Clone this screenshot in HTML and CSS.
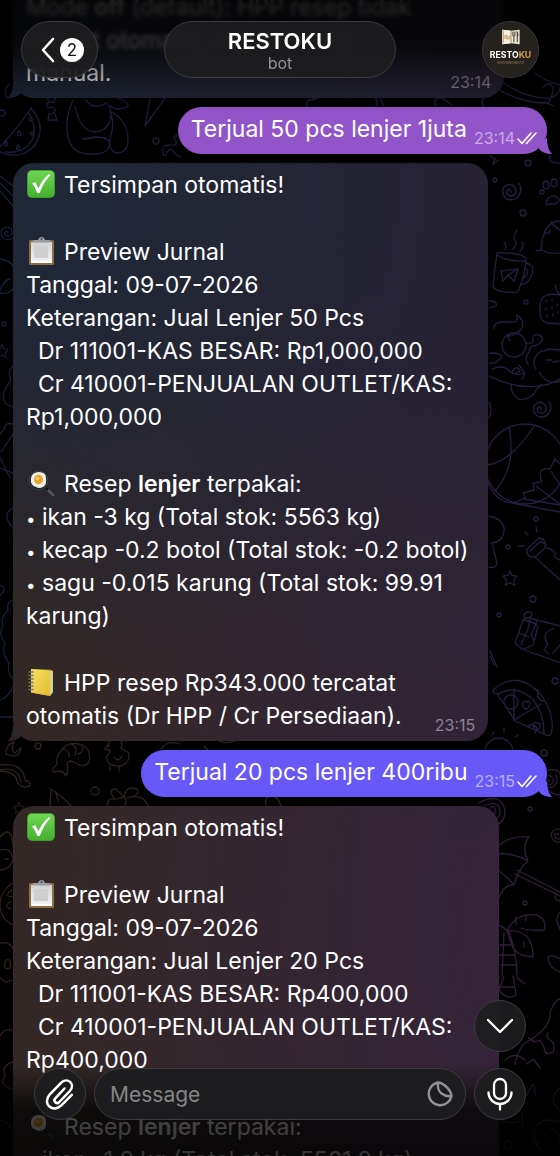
FILE: index.html
```html
<!DOCTYPE html>
<html lang="id">
<head>
<meta charset="utf-8">
<meta name="viewport" content="width=device-width, initial-scale=1">
<title>RESTOKU</title>
<link rel="stylesheet" href="styles.css">
</head>
<body>
<svg class="defs" aria-hidden="true">
  <defs>
    <linearGradient id="green" x1="0" y1="0" x2="0" y2="1"><stop offset="0" stop-color="#6fd653"/><stop offset="1" stop-color="#45b02f"/></linearGradient>
    <linearGradient id="yellow" x1="0" y1="0" x2="1" y2="1"><stop offset="0" stop-color="#f8e268"/><stop offset="1" stop-color="#e2bc2c"/></linearGradient>
    <linearGradient id="paper" x1="0" y1="0" x2="0" y2="1"><stop offset="0" stop-color="#d2d2d4"/><stop offset="1" stop-color="#f4f4f6"/></linearGradient>
    <symbol id="check" viewBox="0 0 28 28">
      <rect width="28" height="28" rx="5" fill="#3f9e30"/><rect x="1" y="1" width="26" height="26" rx="4" fill="url(#green)"/>
      <path d="M5 13.6 8.3 12l3.2 6.2C14 12.400 17.400 7.600 22 4l1.300 1C18.600 10 15.300 16 12.700 23h-2.600C9 19.300 7.400 16.200 5 13.600Z" fill="#fff"/>
    </symbol>
    <symbol id="clip" viewBox="0 0 28 28">
      <rect x="2" y="3" width="25" height="25" rx="1.500" fill="#8f6f45"/><path d="M4 5h21v21H4z" fill="url(#paper)"/><path d="M7 9h14v12H7z" fill="#cfcfd2"/>
      <path d="M4 26V24h21v2z" fill="#fff"/><path d="M6 5.500V4q0-1 1-1h4q1-3 3.500-3T18 3h4q1 0 1 1v1.500z" fill="#9a9ca2"/><circle cx="14.500" cy="2" r="1" fill="#44464c"/>
    </symbol>
    <symbol id="pan" viewBox="0 0 28 28">
      <path d="m17 17 9 9" stroke="#50565b" stroke-width="2.500" stroke-linecap="round"/><path d="m16 16 5 5" stroke="#15191b" stroke-width="3"/>
      <circle cx="11.500" cy="11.500" r="10.500" fill="#1b2223"/><circle cx="11.500" cy="11.500" r="9.500" fill="none" stroke="#3c4748"/>
      <path d="M4 9q1-6 8-6 7 0 7 6 1 7-3 9-4 2-7 0-6-1-5-9Z" fill="#f2eee3"/><circle cx="11.500" cy="10.500" r="4.500" fill="#e7a22c"/><circle cx="10.500" cy="9.500" r="1.800" fill="#f8cf72"/>
    </symbol>
    <symbol id="note" viewBox="0 0 28 28">
      <path d="m4 1 19 .5 3 1.500V24l-3 4L4 24.500z" fill="#a88b20"/><path d="m4 1 19 1.500V28L4 24.500z" fill="url(#yellow)"/><path d="m23 2.500 3 .5v21l-3 4z" fill="#d5cc98"/>
      <path d="M2 4h4M2 7.500h4M2 11h4M2 14.500h4M2 18h4M2 21.500h4" stroke="#777261" stroke-width="1.500" stroke-linecap="round"/>
    </symbol>
    <symbol id="ticks" viewBox="0 0 20 14">
      <path d="m1 8 4 4.500L14 2M9.500 12.500 19 2" fill="none" stroke="#fff" stroke-width="1.600" stroke-linecap="round" stroke-linejoin="round"/>
    </symbol>
    <symbol id="tail" viewBox="0 0 18 16"><path d="M13 0Q13 11 18 16 10 16 6 12L1 5Z"/></symbol>
    <symbol id="spiral" viewBox="-10 -10 20 20"><path d="M7-8c5 7-1 16-8 15C-8 6-10-3-4-6 1-9 6-3 4 1 2 5-4 4-4 0c0-3 4-3 4 0" fill="none"/></symbol>
    <symbol id="star" viewBox="-10 -10 20 20"><path d="m0-8 2 5 6 1-4 4 1 6-5-3-5 3 1-6-4-4 6-1Z" fill="none" stroke-linejoin="round"/></symbol>
  </defs>
</svg>

<div class="screen">
  <svg class="wallpaper" viewBox="0 0 560 1156" preserveAspectRatio="xMidYMin slice" aria-hidden="true">
    <g class="doodle blue">
      <path d="M31 108C47 126 40 145 25 153q-14 6-28-3Q18 128 31 108M28 112q10 16 4 28-8 14-26 12M19 131q4 4 0 5-3-1 0-5M31 118q4 2 0 3-4-1 0-3M32 132q4 1 0 3-4-1 0-3M6 141q3 4 0 5-3-1 0-5M18 145q3 4 0 5-3-1 0-5"/>
      <circle cx="2" cy="113" r="3"/><circle cx="156" cy="141" r="3"/>
      <path d="m46 94 11 0-3 8H49zM48 102q-3 4 0 6 6-2 7 2 0 4-6 4M49 114l-1 6h9l-2-6"/>
      <path d="M73 100q-10 22-4 40 4 14 22 14 18 1 19-11-2-6-14-6-9 2-14 2M75 106q4 22 18 26 13 0 17-11 4-12-4-18-12 8-20-3M110 111q18 10 18 28 0 14-12 14-10-4-4-22 2-10-2-20M118 98q10 3 10 8-10 6-18 0M165 98l-20 28 5-27M8 98q-6-5 1-14"/>
      <path d="M181 157q-6-2-8-6t-6 1q-1 6-4 2-2-8 5-9 10 1 8-4-4-4 1-6"/>
      <path d="m0 176 13 10M0 183l13 13M0 191l13 15"/><use href="#spiral" x="-1" y="223" width="18" height="20"/>
      <path d="M0 259q12 2 13 8M0 290q5-11 10-11M0 293q10 2 14-6"/><circle cx="4" cy="324" r="2"/><use href="#star" x="-6" y="343" width="16" height="16"/>
      <path d="M13 366q-6 5-2 14-12 16-5 24l7 3M13 424q-8-2-8 4l-5 6M13 434 1 452M0 468l13 5M0 457l10 21"/>
      <path d="M13 508q-9 5-5 13l6 8M0 585q8 3 0 10M13 600q-7 3-5 11-8 6-5 14-5 10 2 18-4 11 4 20-2 10 4 16M0 700q8-2 13-13M0 717h13"/>
    </g>
    <g class="doodle purple">
      <path d="M500 80q24 19 50 18 8-2 10-10M493 86q25 17 54 17M535 73q8 7 25 12M543 88q6-9 10 0 0 7-5 16M548 103l5 3M484 98q-4 3 0 9M350 98q2-8 15-5 12-2 12 13M360 98a13 13 0 0 1 23 8M436 106q-4-9 6-8l10 7M307 107q-2-8 9-8l7-5"/>
      <path d="m490 156 5 3-2 5 6-4M550 155q-3 9 10 8"/><circle cx="528" cy="163" r="3"/><circle cx="495" cy="180" r="2"/><circle cx="523" cy="213" r="3"/><circle cx="526" cy="302" r="2"/>
      <use href="#spiral" x="500" y="181" width="22" height="22"/>
      <path d="M546 204q1-9 9-8l6 5M546 204q0 2 3 0h6l5-4"/><ellipse cx="546" cy="185" rx="3" ry="4"/><ellipse cx="554" cy="183" rx="3" ry="4"/><circle cx="542" cy="192" r="2"/>
      <path d="M560 221q-17 0-19 29l-5 1M541 250q10 5 20 3M545 233q5 1 5-3M551 222q6 7 10 8"/>
      <path d="M497 253q-3 22-4 34 7 7 25 5 8-20 8-34-7-6-29-5ZM497 255q10 7 28 6M526 263q9 2 6 11-4 11-11 10M524 269q5 0 3 5-2 4-5 5M501 271l17-2-4 12-6-6-5 6zM508 275l10-6M513 249q5-5 2-9t2-10M505 250q2-4-1-8M520 251q5-4 2-9"/>
      <path d="M560 295q-21-4-20 13-1 13 7 15l13 1M555 285q2 9 6 10M546 300v2M552 299v2M557 304v2M546 308v2M552 307v2M547 315v2M553 314v2M558 311v2"/>
      <circle cx="514" cy="345" r="12"/><path d="M494 329q0-7 8-7t12 0 3-5 4 2-3 13-11 3l3 6M489 301q9 0 7 5l-7 2M526 343q8 1 7-3-1-7 6-5 8 4-2 10-8 1-8 7-5 7-1 12M490 353q13 0 11 5-6 6-11 5M492 369q10-4 15 0 7 8 18 4M489 376q34 17 63 7l8-4M511 384q0 12 8 15 12 2 18-10l5-5M536 369q-6-9 5-18 5 0 7-2l12 1M546 360h6M553 362l6-1M539 372q8 14 21 9M512 372q5-8 8-1-8 5-8 1M519 365q8 9 3 14"/>
      <use href="#spiral" x="531" y="399" width="21" height="21"/><path d="M489 402q4 8 0 16"/>
      <circle cx="525" cy="464" r="40"/><path d="M509 427q8 40-14 64M535 425q-24 37-48 40M487 480q8 22 25 23l48 9M513 503l12-5-2-5 11-3-1-7 9-1q-6-15 8-13l5-10 5 5M524 499l36 6M536 486l25 19M551 471l9 14"/>
      <path d="M489 516q17 4 15 16-2 10-12 11l5 20q-1 6-8 4"/><circle cx="536" cy="519" r="2"/><circle cx="508" cy="547" r="2"/><circle cx="533" cy="599" r="3"/><circle cx="499" cy="615" r="2"/><circle cx="555" cy="681" r="3"/>
      <path d="M527 549 539 538q8 1 6 10l-10 9q-9 1-8-8ZM530 551l11-10 5 4M535 557l25 23M547 548q9 2 8 9l6 4M525 532l3 3M536 527l1 5M519 546h5"/>
      <use href="#star" x="501" y="568" width="18" height="20"/>
      <path d="M515 643l8-23q2-3 7-2l7 2 23 6M515 643l7 6 39 14M523 620q8 1 15 6l-5 19-9 4M530 618l-2 11-7 16M537 621l-6 14 3 6M524 616q0-4 6-4 4 2 0 5-6 2-6-1M549 654q-8-4-1-10-7-9 2-14l4-2M553 653q4-4 7-8M519 633l10 4"/>
      <path d="M493 690q25-22 49 6 14 22 9 38-3 3-7 0 0-20-10-33-16-18-36-7-5 0-5-4ZM497 694q16 23 18 27l29 13M514 689v31l27-16"/><circle cx="511" cy="702" r="7"/><path d="M523 704q0-4 3-2 4-2 4 2-2 5-4 5-4-1-3-5M533 726q0-5 4-3 4 0 3 4-2 4-5 3zM538 690q-2 11 6 11M528 728q3-7 9 0l-2 5"/>
      <path d="m490 651 7 16M490 656l4 9M485 752a14 14 0 0 1 28 0M492 735l2-3M504 728v4M475 734l4 2M518 735l-2 2"/>
    </g>
    <g class="doodle brown">
      <path d="M6 754q0-10 8-12-4 9 1 11l6-5q-2 12-15 6"/><circle cx="38" cy="746" r="3"/><circle cx="95" cy="791" r="4"/>
      <path d="M0 765q22-3 25 14-1 3 3 2 6 5-3 6-6 0-8-6-1-9-17-10M0 770q18-4 21 12"/>
      <path d="M60 752q8-12 22-7 10 5 7 17-5 6-12 2-7-6-10 0 2 8-1 11l-5-4-8 1q-1-5 4-7-1-8 3-13M64 749q6 2 5 8M72 744q6 4 3 11M83 746q0 7-5 8M63 772l3 4"/>
      <path d="M109 747q-2-8 6-8 9 0 6 9l8 5q1 11-9 13-15 0-13-10 4-4 3-6l-5-1 3-4M110 766v4M119 766v5M114 757q4 6 8-1"/>
      <path d="m50 806 1-17q12 8 20 17M56 792l2 9M108 806q-2-8 7-7-9-10 1-10l8 8q2-12 13-8 4 7-10 9 16-5 21 8M117 799q12-6 8 7"/>
      <use href="#star" x="12" y="801" width="14" height="14"/><path d="M266 806q-2-10 5-10t10 10M204 746l5 5M219 741q8 4 20-2M162 748q6-8 18-4"/>
      <path d="M0 837q8-10 12 0l1 9M0 850q12-3 13 10-4 10-13 10M5 859h3M13 883q-14 8-13 24 2 13 13 18M12 890q-9 6 0 7M11 902q-9 4 0 7M0 943q10-2 14 7M6 960q6-2 4 8-8 3-4-8M0 978l6 4 6-2M0 1036q4-8 12-6M13 1062q-12 3-8 14-6 9 7 13M0 1120q8 1 11 8"/>
    </g>
    <g class="doodle plum">
      <circle cx="544" cy="753" r="3"/><path d="M548 770q11-2 13 6M549 791q7 5 12 3"/><use href="#spiral" x="541" y="773" width="17" height="17"/>
      <path d="M478 803q24-12 27 8 0 13-13 16M484 806q16-7 16 6 0 8-9 7M490 808q6-5 5 5l-4 3"/><circle cx="530" cy="809" r="2"/><circle cx="525" cy="903" r="2"/><use href="#spiral" x="549" y="826" width="19" height="19"/>
      <path d="M497 847q12-12 32-10-8 10-1 24-9 6-14 24-10-2-16 15M497 854q15-2 31 7M497 870q10 6 17 15M517 870l43 22M515 874l45 22M556 895q-3 5 4 6"/>
      <path d="M497 925q6 1 10 6 9-19 30-16 11 6 7 15-14 1-23-2M507 931q26-2 26 25-12 2-20-8zM504 933l-2 43M509 932q8 22 8 44M500 945h12M500 955h15M501 965h15M516 917v7M526 916v5M524 947v-5M560 912q-5 6-2 12l3 8M548 957q5-3 12 2M548 957q1 12 12 15"/>
      <path d="M504 976l-5 14q8 11 17 5l-3-19M499 987h16M517 978l8 6M550 1012q6-13 10-13M550 1012q2 16-25 31-6 4-10 21M529 1038q6 6 11 2 4 6 5 11t8 1q3-8-3-12-5-4-2-7M505 1060q10-9 20 0M526 1064l8-5M534 1060l6 8M560 1088q-14 12 0 22M527 1095q8-20 8 0M522 1128v-16M500 1120q11 5 20 1"/>
      <circle cx="508" cy="1145" r="4"/><path d="M535 1128q8-12 25-6M536 1126q-7 16 7 26M547 1130q14-4 13 16M539 1140q-4 5 1 8"/>
    </g>
  </svg>

  <main class="chat">
    <article class="bubble in first">
      <p>Mode <b>off</b> (default): HPP resep tidak<br>dicatat otomatis, HPP dihitung</p>
      <div class="last"><p>manual.</p><time>23:14</time></div>
      <svg class="tail"><use href="#tail"/></svg>
    </article>

    <article class="bubble out violet">
      <p>Terjual 50 pcs lenjer 1juta</p><time>23:14</time><svg class="ticks" role="img" aria-label="Dibaca"><use href="#ticks"/></svg>
      <svg class="tail"><use href="#tail"/></svg>
    </article>

    <article class="bubble in">
      <p><svg class="emoji"><use href="#check"/></svg>Tersimpan otomatis!</p>
      <p><svg class="emoji"><use href="#clip"/></svg>Preview Jurnal<br>Tanggal: 09-07-2026<br>Keterangan: Jual Lenjer 50 Pcs<br><span class="entry">Dr 111001-KAS BESAR: Rp1,000,000</span><br><span class="entry">Cr 410001-PENJUALAN OUTLET/KAS:</span><br>Rp1,000,000</p>
      <p><svg class="emoji"><use href="#pan"/></svg>Resep <b>lenjer</b> terpakai:<br><span class="dot">•</span> ikan -3 kg (Total stok: 5563 kg)<br><span class="dot">•</span> kecap -0.2 botol (Total stok: -0.2 botol)<br><span class="dot">•</span> sagu -0.015 karung (Total stok: 99.91<br>karung)</p>
      <div class="last"><p><svg class="emoji"><use href="#note"/></svg>HPP resep Rp343.000 tercatat<br>otomatis (Dr HPP / Cr Persediaan).</p><time>23:15</time></div>
      <svg class="tail"><use href="#tail"/></svg>
    </article>

    <article class="bubble out indigo">
      <p>Terjual 20 pcs lenjer 400ribu</p><time>23:15</time><svg class="ticks" role="img" aria-label="Dibaca"><use href="#ticks"/></svg>
      <svg class="tail"><use href="#tail"/></svg>
    </article>

    <article class="bubble in wide">
      <p><svg class="emoji"><use href="#check"/></svg>Tersimpan otomatis!</p>
      <p><svg class="emoji"><use href="#clip"/></svg>Preview Jurnal<br>Tanggal: 09-07-2026<br>Keterangan: Jual Lenjer 20 Pcs<br><span class="entry">Dr 111001-KAS BESAR: Rp400,000</span><br><span class="entry">Cr 410001-PENJUALAN OUTLET/KAS:</span><br>Rp400,000</p>
      <p><svg class="emoji"><use href="#pan"/></svg>Resep <b>lenjer</b> terpakai:<br><span class="dot">•</span> ikan -1.2 kg (Total stok: 5561.8 kg)</p>
    </article>
  </main>

  <div class="blur-top"></div>
  <div class="fade-top"></div>
  <div class="fade-bottom"></div>

  <header class="topbar">
    <button class="glass back" aria-label="Kembali">
      <svg width="14" height="26" viewBox="0 0 14 26"><path d="M12 2 2 13l10 11" fill="none" stroke="#fff" stroke-width="2.600" stroke-linecap="round" stroke-linejoin="round"/></svg>
      <span class="count">2</span>
    </button>
    <button class="glass title"><strong>RESTOKU</strong><span>bot</span></button>
    <button class="glass avatar" aria-label="Profil">
      <svg viewBox="0 0 57 57">
        <circle cx="28.500" cy="28.500" r="28.500" fill="#25221d"/>
        <path d="m20 8 9 1 9-1v15l-9-1-9 1z" fill="#e9e3d2"/><path d="M29 9v13l-9 1V8z" fill="#f6efdf"/><path d="M21 9v13" stroke="#b99b5d"/><path d="M29 9v13" stroke="#9c8a68" stroke-width="1"/>
        <text x="22" y="18" class="logo-rp">Rp</text>
        <path d="M31 10v4q1 2 2 0v-4M32 14v7M35.500 10v11M35 10q2 2 1 5" stroke="#3a352b" fill="none"/>
        <text x="28.500" y="37.500" class="logo-name">RESTO<tspan class="gold">KU</tspan></text>
        <text x="28.500" y="43.500" class="logo-sub">AKUNTANSI RESTO</text>
      </svg>
    </button>
  </header>

  <footer class="dock">
    <button class="glass round" aria-label="Gulir ke bawah"><svg width="28" height="16" viewBox="0 0 28 16"><path d="m2 2 12 12L26 2" fill="none" stroke="#fff" stroke-width="2.300" stroke-linecap="round" stroke-linejoin="round"/></svg></button>
    <form class="composer">
      <button type="button" class="glass round" aria-label="Lampirkan"><svg width="30" height="34" viewBox="0 0 30 34"><path d="m19.500 11.500-9.200 9.800c-2.600 2.900 1.300 6.400 4 3.700L25 13.800c5.800-6.700-2.600-14.300-9-8L4.600 17.700c-8 9 3.500 19 12 10.500l10.200-10.400" fill="none" stroke="#fff" stroke-width="2.500" stroke-linecap="round" stroke-linejoin="round"/></svg></button>
      <div class="glass field">
        <input type="text" placeholder="Message" aria-label="Message">
        <button type="button" class="sticker" aria-label="Stiker"><svg width="26" height="26" viewBox="0 0 26 26"><path d="M11 1.500A11.500 11.500 0 1 0 24.500 15Q24 10 18.500 5 14.500 1.500 11 1.500Q10 9 14.500 12.500T24.500 15" fill="none" stroke="#929294" stroke-width="2.400" stroke-linejoin="round"/></svg></button>
      </div>
      <button type="button" class="glass round" aria-label="Pesan suara"><svg width="26" height="34" viewBox="0 0 26 34"><path d="M13 2a6 6 0 0 0-6 6v8a6 6 0 0 0 12 0V8a6 6 0 0 0-6-6ZM1.500 15.500a11.500 11.500 0 0 0 23 0M13 27v5.500" fill="none" stroke="#fff" stroke-width="2.300" stroke-linecap="round"/></svg></button>
    </form>
  </footer>
</div>
</body>
</html>
```
FILE: styles.css
```css
* { box-sizing: border-box; }
body { margin: 0; background: #000; color: #fff; font-family: Inter, "Liberation Sans", sans-serif; font-size: 23px; line-height: 33px; }
p { margin: 0; }
b { font-weight: 600; }
button, input { font: inherit; color: inherit; border: 0; padding: 0; background: none; }
svg { display: block; }
.defs { position: absolute; width: 0; height: 0; }

.screen { position: relative; height: 100vh; overflow: hidden; }
.wallpaper { position: absolute; inset: 0; width: 100%; height: 100%; }
.doodle { fill: none; stroke-width: 1.300; stroke-linecap: round; }
.blue { stroke: #1b1e3c; }
.purple { stroke: #271d40; }
.brown { stroke: #2f211e; }
.plum { stroke: #301e38; }

.chat { position: relative; display: flex; flex-direction: column; align-items: flex-start; gap: 9px; padding: 0 13px; }
.bubble { position: relative; padding: 6px 13px 8px; border-radius: 21px; white-space: nowrap; }
.in {
  width: 89%;
  background:
    radial-gradient(circle at 0 15%, #202737 10%, transparent 45%) fixed,
    radial-gradient(circle at 100% 15%, #272234 20%, transparent 60%) fixed,
    radial-gradient(ellipse at 100% 80%, #35243a 10%, transparent 70%) fixed,
    #332825;
}
.in p + p, p + .last { margin-top: 34px; }
.in.first { width: 92%; margin-top: -15px; }
.in.first .last { margin-top: 0; }
.in.wide { width: 91%; }
.last { display: flex; justify-content: space-between; align-items: flex-end; }
.entry { padding-left: 12px; }
.dot { font-size: 17px; line-height: 1; }
.emoji { display: inline-block; width: 28px; height: 28px; margin: 0 9px 0 1px; vertical-align: -5px; }
time { font-size: 16px; line-height: 16px; color: #8c8590; }

.out { align-self: flex-end; display: flex; align-items: flex-end; padding-right: 10px; border-radius: 24px; }
.out time { margin-left: 7px; color: #c9aae6; }
.out .ticks { width: 20px; height: 14px; margin: 0 0 1px 2px; }
.tail { position: absolute; right: -5px; bottom: 0; width: 18px; height: 16px; }
.in .tail { right: auto; left: -5px; transform: scaleX(-1); fill: #2d2729; }
.in.first .tail { fill: #20273a; }
.violet { background: #9255c9; }
.violet .tail { fill: #9255c9; }
.indigo { background: #6958f8; }
.indigo .tail { fill: #6958f8; }
.out.indigo time { color: #b7aefc; }

.blur-top, .fade-top, .fade-bottom { position: absolute; left: 0; right: 0; pointer-events: none; }
.blur-top { top: 0; height: 58px; backdrop-filter: blur(2px); }
.fade-top { top: 0; height: 112px; background: linear-gradient(rgba(0, 0, 0, .86), rgba(0, 0, 0, .76) 40%, rgba(0, 0, 0, .35) 70%, transparent); }
.fade-bottom { bottom: 0; height: 92px; background: linear-gradient(transparent, rgba(0, 0, 0, .72) 50%, rgba(0, 0, 0, .8)); }

.glass { background: rgba(29, 29, 31, .94); border: 1px solid #3b3b3e; border-radius: 29px; }
.topbar { position: absolute; top: 21px; left: 21px; right: 21px; display: grid; grid-template-columns: 1fr auto 1fr; }
.back { display: flex; align-items: center; justify-content: center; gap: 5px; width: 77px; height: 57px; padding-left: 6px; }
.count { width: 24px; height: 24px; border-radius: 12px; background: #fff; color: #111; font-size: 17px; line-height: 24px; }
.title { display: flex; flex-direction: column; align-items: center; justify-content: center; min-width: 232px; height: 57px; }
.title strong { font-size: 22px; font-weight: 600; line-height: 26px; }
.title span { font-size: 16px; line-height: 18px; color: #929296; }
.avatar { justify-self: end; width: 57px; height: 57px; overflow: hidden; }
.logo-name { font: 700 9px Inter, sans-serif; fill: #fff; text-anchor: middle; }
.logo-rp { font: 600 5px Inter, sans-serif; fill: #b08c42; }
.logo-sub { font: 3px Inter, sans-serif; fill: #94825c; text-anchor: middle; }
.gold { fill: #cda052; }

.dock { position: absolute; left: 34px; right: 34px; bottom: 36px; display: flex; flex-direction: column; align-items: flex-end; gap: 16px; }
.composer { display: flex; gap: 8px; width: 100%; margin: 0; }
.round { display: grid; place-items: center; flex: none; width: 52px; height: 52px; }
.field { flex: 1; min-width: 0; display: flex; align-items: center; padding: 0 12px 0 15px; }
.field input { flex: 1; min-width: 0; outline: 0; font-size: 21px; }
.field input::placeholder { color: #858587; opacity: 1; }
```
